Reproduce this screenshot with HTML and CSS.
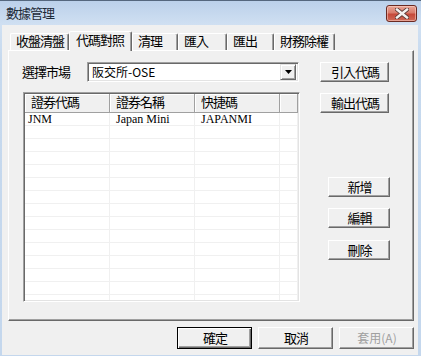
FILE: index.html
```html
<!DOCTYPE html>
<html lang="zh-Hant">
<head>
<meta charset="utf-8">
<title>數據管理</title>
<link rel="stylesheet" href="styles.css">
</head>
<body>
<div class="window">
  <div class="titlebar">
    <span class="title">數據管理</span>
    <div class="close">
      <svg width="14" height="11" viewBox="0 0 14 11">
        <path d="M2 1.5 L12 9.5 M12 1.5 L2 9.5" stroke="#5a3a36" stroke-width="4.2" stroke-linecap="square" fill="none"/>
        <path d="M2 1.5 L12 9.5 M12 1.5 L2 9.5" stroke="#f4f1f0" stroke-width="2.4" stroke-linecap="square" fill="none"/>
      </svg>
    </div>
  </div>
  <div class="client">
    <div class="tabs">
      <div class="tab">收盤清盤</div>
      <div class="tab active">代碼對照</div>
      <div class="tab">清理</div>
      <div class="tab">匯入</div>
      <div class="tab">匯出</div>
      <div class="tab">財務除權</div>
    </div>
    <div class="panel">
      <div class="left-col">
        <div class="market-row">
          <span class="label">選擇市場</span>
          <div class="combo">
            <span class="combo-text">阪交所-OSE</span>
            <span class="drop">
              <svg width="7" height="4" viewBox="0 0 7 4"><polygon points="0,0 7,0 3.5,4" fill="#000"/></svg>
            </span>
          </div>
        </div>
        <div class="list">
          <div class="list-head">
            <div class="hcell">證券代碼</div>
            <div class="hcell">證券名稱</div>
            <div class="hcell">快捷碼</div>
            <div class="hcell"></div>
          </div>
          <div class="rows">
            <div class="row"><div class="cell first">JNM</div><div class="cell">Japan Mini</div><div class="cell">JAPANMI</div><div class="cell"></div></div>
            <div class="row"><div class="cell"></div><div class="cell"></div><div class="cell"></div><div class="cell"></div></div>
            <div class="row"><div class="cell"></div><div class="cell"></div><div class="cell"></div><div class="cell"></div></div>
            <div class="row"><div class="cell"></div><div class="cell"></div><div class="cell"></div><div class="cell"></div></div>
            <div class="row"><div class="cell"></div><div class="cell"></div><div class="cell"></div><div class="cell"></div></div>
            <div class="row"><div class="cell"></div><div class="cell"></div><div class="cell"></div><div class="cell"></div></div>
            <div class="row"><div class="cell"></div><div class="cell"></div><div class="cell"></div><div class="cell"></div></div>
            <div class="row"><div class="cell"></div><div class="cell"></div><div class="cell"></div><div class="cell"></div></div>
            <div class="row"><div class="cell"></div><div class="cell"></div><div class="cell"></div><div class="cell"></div></div>
            <div class="row"><div class="cell"></div><div class="cell"></div><div class="cell"></div><div class="cell"></div></div>
            <div class="row"><div class="cell"></div><div class="cell"></div><div class="cell"></div><div class="cell"></div></div>
            <div class="row"><div class="cell"></div><div class="cell"></div><div class="cell"></div><div class="cell"></div></div>
            <div class="row"><div class="cell"></div><div class="cell"></div><div class="cell"></div><div class="cell"></div></div>
            <div class="row"><div class="cell"></div><div class="cell"></div><div class="cell"></div><div class="cell"></div></div>
            <div class="row"><div class="cell"></div><div class="cell"></div><div class="cell"></div><div class="cell"></div></div>
          </div>
        </div>
      </div>
      <div class="right-col">
        <button class="btn wide">引入代碼</button>
        <button class="btn wide gap-s">輸出代碼</button>
        <button class="btn narrow gap-l">新增</button>
        <button class="btn narrow gap-s">編輯</button>
        <button class="btn narrow gap-m">刪除</button>
      </div>
    </div>
    <div class="footer">
      <button class="btn foot default">確定</button>
      <button class="btn foot">取消</button>
      <button class="btn foot disabled">套用(A)</button>
    </div>
  </div>
</div>
</body>
</html>
```

FILE: styles.css
```css
* { box-sizing: border-box; }
html, body { margin: 0; padding: 0; }
body {
  width: 421px;
  height: 356px;
  overflow: hidden;
  font-family: "Noto Sans CJK TC", "Liberation Sans", sans-serif;
  font-size: 12px;
  line-height: 14px;
  color: #000;
  background: #c4d6ec;
}
.window {
  width: 421px;
  height: 356px;
  display: flex;
  flex-direction: column;
  background: linear-gradient(#bbd0ea, #d0e0f2 24px, #c6d9ee 60px, #c4d7ed);
  border-top: 1px solid #55677e;
  padding: 0 3px 1px 2px;
}
.titlebar {
  height: 24px;
  display: flex;
  align-items: flex-start;
  justify-content: space-between;
  padding-left: 4px;
}
.title {
  margin-top: 5px;
  font-size: 13px;
  letter-spacing: -1px;
  color: #1e2a38;
}
.close {
  margin-top: 4px;
  margin-right: 1px;
  width: 31px;
  height: 17px;
  border: 1px solid #6b2a22;
  border-radius: 3px;
  background: linear-gradient(#e9a596, #d97c6c 45%, #c6493a 55%, #cf6a58);
  box-shadow: inset 0 0 0 1px rgba(255, 220, 210, 0.5);
  display: flex;
  align-items: center;
  justify-content: center;
}
.client {
  flex: 1;
  background: #f0f0f0;
  display: flex;
  flex-direction: column;
}
.tabs {
  margin-top: 6px;
  height: 20px;
  margin-bottom: -1px;
  padding-left: 8px;
  display: flex;
  align-items: flex-end;
  position: relative;
  z-index: 1;
}
.tab {
  height: 17px;
  margin-bottom: 1px;
  padding-left: 5px;
  padding-top: 0;
  font-size: 13px;
  letter-spacing: -1px;
  background: #f0f0f0;
  border-top: 1px solid #fff;
  border-left: 1px solid #fff;
  border-right: 1px solid #696969;
  box-shadow: inset -1px 0 0 #a0a0a0;
  border-top-left-radius: 2px;
  border-top-right-radius: 2px;
  white-space: nowrap;
}
.tab:nth-child(1) { width: 59px; }
.tab:nth-child(2) { width: 63px; }
.tab:nth-child(3) { width: 46px; }
.tab:nth-child(4) { width: 49px; }
.tab:nth-child(5) { width: 47px; }
.tab:nth-child(6) { width: 61px; }
.tab.active {
  height: 20px;
  margin-bottom: 0;
  padding-left: 6px;
  padding-top: 1px;
}
.panel {
  margin-left: 6px;
  margin-right: 4px;
  height: 271px;
  border-top: 1px solid #fff;
  border-left: 1px solid #fff;
  border-right: 1px solid #696969;
  border-bottom: 1px solid #696969;
  box-shadow: inset -1px -1px 0 #a0a0a0;
  padding: 11px 0 0 13px;
  display: flex;
}
.left-col {
  width: 278px;
  display: flex;
  flex-direction: column;
}
.market-row {
  height: 20px;
  display: flex;
  align-items: center;
}
.label {
  width: 65px;
  font-size: 13px;
  letter-spacing: -1px;
}
.combo {
  width: 212px;
  height: 20px;
  background: #fff;
  border-top: 1px solid #a0a0a0;
  border-left: 1px solid #a0a0a0;
  border-right: 1px solid #fff;
  border-bottom: 1px solid #fff;
  box-shadow: inset 1px 1px 0 #696969, inset -1px -1px 0 #e3e3e3;
  display: flex;
  align-items: center;
  justify-content: space-between;
  padding: 0 2px 0 4px;
}
.combo-text { line-height: 14px; }
.drop {
  width: 16px;
  height: 16px;
  background: #f0f0f0;
  border-top: 1px solid #e3e3e3;
  border-left: 1px solid #e3e3e3;
  border-right: 1px solid #696969;
  border-bottom: 1px solid #696969;
  box-shadow: inset 1px 1px 0 #fff, inset -1px -1px 0 #a0a0a0;
  display: flex;
  align-items: center;
  justify-content: center;
}
.list {
  margin-top: 10px;
  margin-left: 1px;
  width: 277px;
  height: 210px;
  background: #fff;
  border-top: 1px solid #a0a0a0;
  border-left: 1px solid #a0a0a0;
  border-right: 1px solid #fff;
  border-bottom: 1px solid #fff;
  box-shadow: inset 1px 1px 0 #696969, inset -1px -1px 0 #e3e3e3;
  padding: 1px 1px 1px 1px;
  overflow: hidden;
  display: flex;
  flex-direction: column;
}
.list-head {
  display: grid;
  grid-template-columns: 85px 85px 85px 1fr;
  height: 19px;
  flex: none;
}
.hcell {
  background: #f0f0f0;
  border-right: 1px solid #a0a0a0;
  border-bottom: 1px solid #a0a0a0;
  box-shadow: inset 1px 1px 0 #fff;
  padding: 1px 0 0 6px;
  font-size: 13px;
  letter-spacing: -1px;
}
.rows {
  flex: 1;
  overflow: hidden;
}
.row {
  display: grid;
  grid-template-columns: 85px 85px 85px 1fr;
  height: 13px;
}
.cell {
  border-right: 1px solid #f0f0f0;
  border-bottom: 1px solid #f0f0f0;
  font-family: "Liberation Serif", "Noto Sans CJK TC", serif;
  font-size: 12px;
  line-height: 12px;
  padding-left: 6px;
  white-space: nowrap;
}
.cell.first { padding-left: 3px; }
.right-col {
  margin-left: 20px;
  width: 70px;
  display: flex;
  flex-direction: column;
  align-items: flex-start;
}
.btn {
  font-family: "Noto Sans CJK TC", "Liberation Sans", sans-serif;
  font-size: 13px;
  letter-spacing: -1px;
  line-height: 14px;
  color: #000;
  background: #f0f0f0;
  height: 20px;
  padding: 0 0 0 1px;
  border-top: 1px solid #fff;
  border-left: 1px solid #fff;
  border-right: 1px solid #696969;
  border-bottom: 1px solid #696969;
  box-shadow: inset -1px -1px 0 #a0a0a0;
  display: flex;
  align-items: center;
  justify-content: center;
}
.wide { width: 69px; }
.narrow { width: 62px; margin-left: 8px; }
.gap-s { margin-top: 11px; }
.gap-m { margin-top: 12px; }
.gap-l { margin-top: 64px; }
.footer {
  margin-top: 6px;
  height: 22px;
  padding-right: 4px;
  display: flex;
  justify-content: flex-end;
  gap: 6px;
}
.foot {
  width: 75px;
  height: 22px;
}
.default {
  border: 1px solid #000;
  box-shadow: inset 1px 1px 0 #fff, inset -1px -1px 0 #696969, inset -2px -2px 0 #a0a0a0;
}
.disabled {
  color: #a0a0a0;
  letter-spacing: 0;
  font-size: 12px;
}
```
